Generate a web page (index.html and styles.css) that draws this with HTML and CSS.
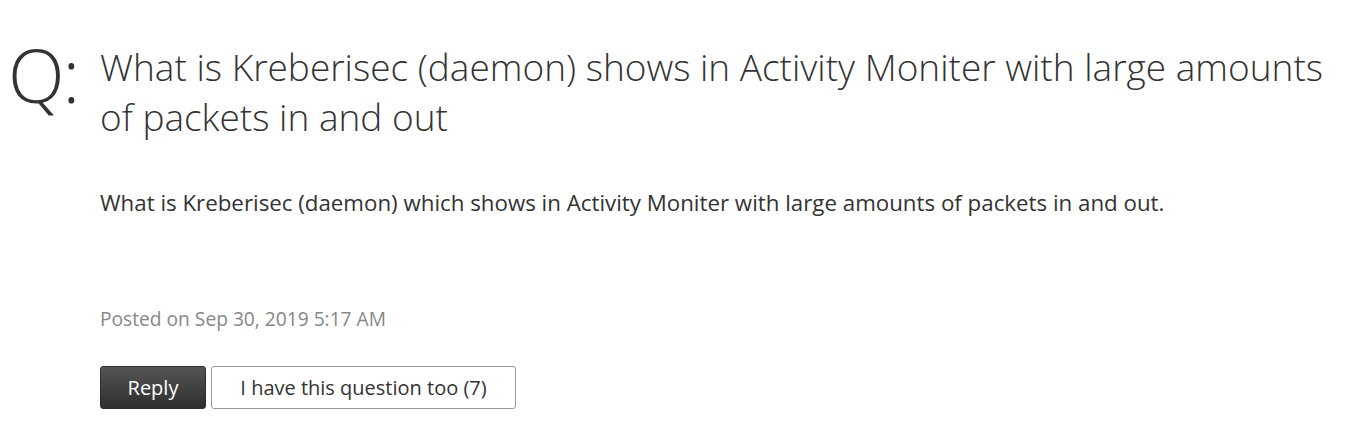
FILE: index.html
```html
<!DOCTYPE html>
<html lang="en">
<head>
    <meta charset="UTF-8">
    <meta name="viewport" content="width=device-width, initial-scale=1.0">
    <title>What is Kreberisec (daemon)</title>
    <link rel="stylesheet" href="styles.css">
</head>
<body>

    <div class="question">
        <!-- Q: marker -->
        <div class="q-mark">Q<span class="q-colon">:</span></div>

        <div class="question-main">
            <h1 class="question-title">What is Kreberisec (daemon) shows in Activity Moniter with large amounts of packets in and out</h1>

            <p class="question-body">What is Kreberisec (daemon) which shows in Activity Moniter with large amounts of packets in and out.</p>

            <p class="posted">Posted on Sep 30, 2019 5:17 AM</p>

            <div class="actions">
                <button class="btn btn-reply" type="button">Reply</button>
                <button class="btn btn-metoo" type="button">I have this question too (7)</button>
            </div>
        </div>
    </div>

</body>
</html>
```

FILE: styles.css
```css
body {
    margin: 0;
    background: #fff;
    color: #333;
    font-family: "Open Sans", "Noto Sans", sans-serif;
}
.question {
    display: flex;
    padding: 42px 0 0 8px;
}
.q-mark {
    width: 92px;
    flex-shrink: 0;
    font-size: 74px;
    font-weight: 300;
    line-height: 74px;
    color: #333;
    margin-top: -4px;
}
.q-colon {
    margin-left: -2px;
}
.question-main {
    flex: 1;
    padding-right: 8px;
}
.question-title {
    margin: 0;
    font-size: 37px;
    font-weight: 300;
    line-height: 50px;
    color: #333;
}
.question-body {
    margin: 47px 0 0;
    font-size: 22.3px;
    line-height: 28px;
}
.posted {
    margin: 90px 0 0;
    font-size: 19.2px;
    line-height: 24px;
    color: #888;
}
.actions {
    display: flex;
    gap: 5px;
    margin-top: 35px;
}
.btn {
    height: 43px;
    font-family: inherit;
    font-size: 20px;
    border-radius: 3px;
    cursor: pointer;
    padding: 0;
}
.btn-reply {
    width: 106px;
    color: #fff;
    border: 1px solid #2f2f2f;
    background: linear-gradient(#555, #2e2e2e);
}
.btn-metoo {
    width: 305px;
    color: #333;
    background: #fff;
    border: 1px solid #999;
}
```
